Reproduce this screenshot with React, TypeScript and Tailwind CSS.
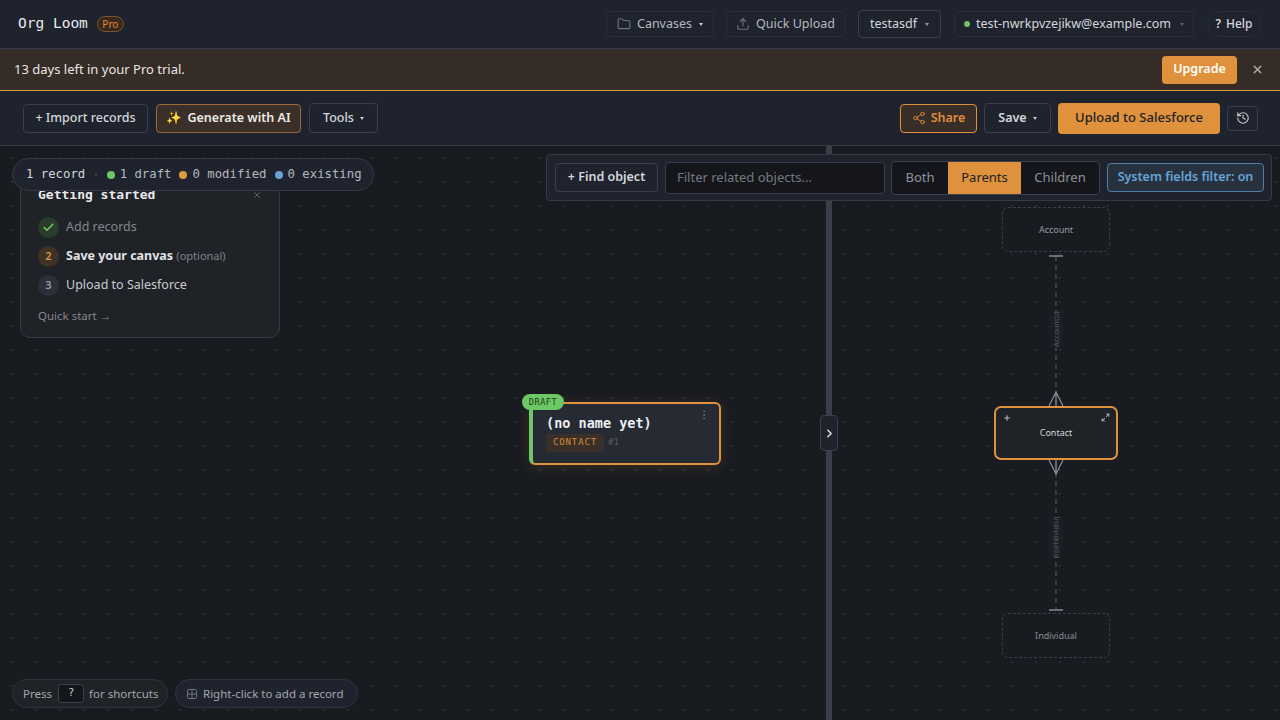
import React from "react";
import { Folder, Upload, Share2, History, Check, ChevronRight, Maximize2, Plus, X, EllipsisVertical, LayoutGrid, Grid2x2 } from "lucide-react";

const Caret = ({ c = "border-t-[#c9ccd3]" }: { c?: string }) => (
  <span className={`inline-block w-0 h-0 border-l-[2.5px] border-r-[2.5px] border-t-[3px] border-l-transparent border-r-transparent ${c}`} />
);
const mono = "font-['DejaVu_Sans_Mono',monospace]";
const dots = "bg-[radial-gradient(circle,#2a2e36_1px,transparent_1px)] bg-[length:24px_24px]";

const Step = ({ n, cls, children }: { n: React.ReactNode; cls: string; children: React.ReactNode }) => (
  <div className="flex items-center gap-[7px] h-[21px]">
    <span className={`w-[21px] h-[21px] rounded-full flex items-center justify-center text-[11px] font-semibold ${cls}`}>{n}</span>
    {children}
  </div>
);

function Header() {
  return (
    <header className="h-[49px] shrink-0 bg-[#1f232d] border-b border-[#363b47] flex items-center pl-[18px] pr-[19px]">
      <span className={`${mono} text-[14.5px] text-[#e8eaee]`}>Org Loom</span>
      <span className="ml-[9px] h-[16px] w-[27px] flex items-center justify-center rounded-full border border-[#7c5230] bg-[#38291f] text-[10px] text-[#e8862f]">Pro</span>
      <div className="ml-auto flex items-center">
        <button className="h-[26px] w-[108px] rounded border border-[#2a2e38] flex items-center justify-center gap-[6px] text-[12.5px] text-[#b5b8bf]">
          <Folder size={14} className="text-[#6d717a]" />Canvases<span className="ml-[1px] flex"><Caret /></span>
        </button>
        <button className="ml-[12px] h-[26px] w-[119px] rounded border border-[#2a2e38] flex items-center justify-center gap-[6px] text-[12.5px] text-[#b5b8bf]">
          <Upload size={14} className="text-[#6d717a]" />Quick Upload
        </button>
        <button className="ml-[13px] h-[28px] w-[83px] rounded border border-[#3a3f4b] flex items-center justify-center gap-[8px] text-[12.5px] text-[#d5d7dc]">
          testasdf<Caret c="border-t-[#9a9da5]" />
        </button>
        <button className="ml-[13px] h-[26px] w-[240px] rounded border border-[#2a2e38] flex items-center justify-center gap-[6px] text-[12.5px] text-[#d5d7dc]">
          <span className="w-[6px] h-[6px] rounded-full bg-[#6cc765]" />test-nwrkpvzejikw@example.com<span className="ml-[3px] flex"><Caret c="border-t-[#5c606a]" /></span>
        </button>
        <button className="ml-[13px] h-[26px] w-[54px] rounded-full border border-[#2a2e38] flex items-center justify-center gap-[5px] text-[12px] font-medium text-[#d5d7dc]">
          <span className="font-semibold">?</span>Help
        </button>
      </div>
    </header>
  );
}

function Banner() {
  return (
    <div className="h-[42px] shrink-0 bg-[#352b27] border-b border-[#e09240] flex items-center pl-[14px] pr-[16px]">
      <span className="text-[13px] text-[#e8e6e3]">13 days left in your Pro trial.</span>
      <button className="ml-auto h-[28px] w-[75px] rounded bg-[#df913c] text-[12.5px] font-semibold text-white">Upgrade</button>
      <X size={13} strokeWidth={3} className="ml-[14px] text-[#a9a6a3]" />
    </div>
  );
}

function Toolbar() {
  return (
    <div className="h-[55px] shrink-0 bg-[#1f232d] border-b border-[#363b47] flex items-center pl-[23px] pr-[22px]">
      <button className="h-[29px] w-[125px] rounded border border-[#3a3f4b] text-[12.5px] font-medium text-[#d5d7dc]">+ Import records</button>
      <button className="ml-[8px] h-[29px] w-[145px] rounded border border-[#9a6b3a] bg-[#3a3029] text-[12.5px] font-semibold text-[#eceae7] flex items-center justify-center gap-[5px]">
        <span>✨</span>Generate with AI
      </button>
      <button className="ml-[8px] h-[30px] w-[69px] rounded border border-[#3a3f4b] text-[12.5px] font-medium text-[#d5d7dc] flex items-center justify-center gap-[6px]">
        Tools<Caret />
      </button>
      <button className="ml-auto h-[29px] w-[77px] rounded border border-[#df913c] bg-[#382d27] text-[12.5px] font-semibold text-[#e08e3b] flex items-center justify-center gap-[5px]">
        <Share2 size={14} strokeWidth={1.5} />Share
      </button>
      <button className="ml-[7px] h-[30px] w-[67px] rounded border border-[#3a3f4b] text-[12.5px] font-semibold text-[#d5d7dc] flex items-center justify-center gap-[6px]">
        Save<Caret />
      </button>
      <button className="ml-[7px] h-[31px] w-[162px] rounded bg-[#df913c] text-[13px] font-medium text-[#1c1f26]">Upload to Salesforce</button>
      <button className="ml-[7px] h-[25px] w-[31px] rounded border border-[#3a3f4b] flex items-center justify-center text-[#c4c6cb]">
        <History size={14} />
      </button>
    </div>
  );
}

function GettingStarted() {
  return (
    <div className="absolute left-[20px] top-[30px] w-[260px] h-[162px] rounded-[10px] border border-[#363a44] bg-[#1f2227] pl-[17px] pt-[8px]">
      <div className="flex items-center justify-between pr-[17px]">
        <span className={`${mono} text-[13px] font-bold text-[#e8eaee]`}>Getting started</span>
        <X size={10} className="text-[#6f737b]" />
      </div>
      <div className="mt-[12px] flex flex-col gap-[8px] text-[12.5px]">
        <Step n={<Check size={13} strokeWidth={3} className="text-[#6cc765]" />} cls="bg-[#2b3c2f]"><span className="text-[#84878d]">Add records</span></Step>
        <Step n="2" cls="bg-[#3d3128] text-[#df913c]"><span className="font-bold text-[#e2e3e6]">Save your canvas <span className="text-[11px] font-normal text-[#7f8289]">(optional)</span></span></Step>
        <Step n="3" cls="bg-[#2c303a] text-[#9a9da5]"><span className="text-[#c9cbd0]">Upload to Salesforce</span></Step>
      </div>
      <div className="mt-[11px] text-[11.5px] text-[#84878d]">Quick start →</div>
    </div>
  );
}

function LeftPane() {
  return (
    <div className={`relative flex-1 ${dots}`}>
      <GettingStarted />
      <div className={`${mono} absolute left-[12px] top-[12px] h-[33px] w-[362px] rounded-full border border-[#363a44] bg-[#1f232d] flex items-center pl-[13px] text-[12.3px] text-[#d5d7dc] whitespace-nowrap`}>
        <span>1 record</span>
        <span className="ml-[8px] text-[#6f737b] text-[9px] mt-[3px]">·</span>
        <span className="ml-[8px] w-[8px] h-[8px] rounded-full bg-[#6cc765]" />
        <span className="ml-[5px] text-[#b5b8bf]">1 draft</span>
        <span className="ml-[8px] w-[8px] h-[8px] rounded-full bg-[#df9a3e]" />
        <span className="ml-[5px] text-[#b5b8bf]">0 modified</span>
        <span className="ml-[8px] w-[8px] h-[8px] rounded-full bg-[#67a4d8]" />
        <span className="ml-[5px] text-[#b5b8bf]">0 existing</span>
      </div>

      <div className="absolute left-[529px] top-[256px] w-[192px] h-[63px] rounded-[6px] border-2 border-[#df913c] border-l-[4px] border-l-[#6cc765] bg-[#262a33] shadow-[0_2px_14px_rgba(223,145,60,0.18)]">
        <span className={`${mono} absolute left-[13px] top-[9px] text-[13.5px] font-bold text-[#eceef1] whitespace-nowrap`}>(no name yet)</span>
        <div className="absolute left-[13px] top-[30px] flex items-center">
          <span className={`${mono} h-[18px] w-[58px] rounded-[3px] bg-[#3a3029] flex items-center justify-center text-[9px] tracking-[0.9px] font-medium text-[#d98a37]`}>CONTACT</span>
          <span className={`${mono} ml-[4px] text-[9px] text-[#5a5e67]`}>#1</span>
        </div>
        <EllipsisVertical size={12} className="absolute right-[9px] top-[5px] text-[#6f737b]" />
      </div>
      <span className={`${mono} absolute left-[522px] top-[248px] h-[16px] w-[42px] rounded-full bg-[#6cc765] flex items-center justify-center text-[8.5px] tracking-[0.6px] text-[#1f3b21]`}>DRAFT</span>
    </div>
  );
}

function Diagram() {
  return (
    <svg className="absolute left-0 top-0" width="448" height="574" viewBox="832 146 448 574" fontFamily="Noto Sans, sans-serif">
      <line x1="1056" y1="256" x2="1056" y2="610" stroke="#4a4e57" strokeWidth="1.3" strokeDasharray="5 4" />
      <line x1="1049" y1="256" x2="1063" y2="256" stroke="#888b92" strokeWidth="1.5" />
      <line x1="1049" y1="610" x2="1063" y2="610" stroke="#888b92" strokeWidth="1.5" />
      <path d="M1049 406 L1056 392 L1063 406 M1056 392 L1056 406" fill="none" stroke="#8d9097" strokeWidth="1.2" />
      <path d="M1049 460 L1056 474 L1063 460 M1056 474 L1056 460" fill="none" stroke="#8d9097" strokeWidth="1.2" />
      <rect x="1049" y="311" width="14" height="36" fill="#1b1e24" />
      <rect x="1049" y="518" width="14" height="38" fill="#1b1e24" />
      <text x="0" y="0" transform="translate(1058.5 329) rotate(-90)" textAnchor="middle" fontSize="7.5" fill="#5b5f68">AccountId</text>
      <text x="0" y="0" transform="translate(1053.5 537) rotate(90)" textAnchor="middle" fontSize="7.5" fill="#5b5f68">IndividualId</text>
    </svg>
  );
}

function RightPane() {
  return (
    <div className={`relative w-[448px] ${dots}`}>
      <Diagram />
      <div className="absolute left-[170px] top-[61px] w-[108px] h-[45px] rounded-[6px] border border-dashed border-[#3a3e47] bg-[#181b20] flex items-center justify-center text-[9px] text-[#9a9da5]">Account</div>
      <div className="absolute left-[162px] top-[260px] w-[124px] h-[54px] rounded-[7px] border-2 border-[#df913c] bg-[#1f2227] flex items-center justify-center text-[9px] text-[#d5d7dc]">
        Contact
        <Plus size={8} strokeWidth={2.5} className="absolute left-[7px] top-[6px] text-[#e0e1e4]" />
        <Maximize2 size={9} strokeWidth={2} className="absolute right-[6px] top-[5px] text-[#e0e1e4]" />
      </div>
      <div className="absolute left-[170px] top-[467px] w-[108px] h-[45px] rounded-[6px] border border-dashed border-[#3a3e47] bg-[#181b20] flex items-center justify-center text-[9px] text-[#8a8d95]">Individual</div>
    </div>
  );
}

function FilterBar() {
  return (
    <div className="absolute left-[546px] top-[8px] w-[726px] h-[47px] rounded border border-[#363a44] bg-[#1f232d] flex items-center pl-[8px] text-[13px]">
      <button className="h-[29px] w-[103px] rounded border border-[#3a3f4b] text-[12.5px] font-semibold text-[#d5d7dc]">+ Find object</button>
      <div className="ml-[7px] h-[32px] w-[220px] rounded border border-[#3a3f4b] bg-[#14161b] flex items-center pl-[11px] text-[#75787f]">Filter related objects...</div>
      <div className="ml-[6px] h-[34px] w-[209px] rounded border border-[#3a3f4b] bg-[#14161b] flex overflow-hidden text-[#8f9299]">
        <span className="w-[56px] flex items-center justify-center">Both</span>
        <span className="w-[73px] flex items-center justify-center bg-[#df913c] text-[#1c1f26]">Parents</span>
        <span className="flex-1 flex items-center justify-center">Children</span>
      </div>
      <button className="ml-[7px] h-[29px] w-[157px] rounded border border-[#4f7fa6] bg-[#27323e] text-[12.5px] font-semibold text-[#67a4d8]">System fields filter: on</button>
    </div>
  );
}

export default function App() {
  return (
    <div className="w-[1280px] h-[720px] overflow-hidden flex flex-col bg-[#181b20] font-['Noto_Sans',sans-serif]">
      <Header />
      <Banner />
      <Toolbar />
      <main className="relative flex-1 flex min-h-0">
        <LeftPane />
        <div className="w-[6px] bg-[#3a3e49]" />
        <RightPane />
        <FilterBar />
        <button className="absolute left-[820px] top-[269px] w-[18px] h-[36px] rounded border border-[#3a3f4b] bg-[#1f232d] flex items-center justify-center text-[#d5d7dc]">
          <ChevronRight size={13} strokeWidth={3} />
        </button>
        <div className="absolute left-[12px] bottom-[12px] h-[29px] w-[156px] rounded-full border border-[#30343d] bg-[#1f2227] flex items-center pl-[10px] text-[11.5px] text-[#a4a7ad]">
          Press
          <span className="ml-[6px] mr-[5px] w-[26px] h-[19px] rounded-[3px] border border-[#3a3f4b] bg-[#14161b] flex items-center justify-center text-[11px] text-[#c4c6cb] font-['DejaVu_Sans_Mono',monospace]">?</span>
          for shortcuts
        </div>
        <div className="absolute left-[175px] bottom-[12px] h-[29px] w-[183px] rounded-full border border-[#30343d] bg-[#1f232d] flex items-center pl-[10px] gap-[5px] text-[11.5px] text-[#a4a7ad]">
          <Grid2x2 size={12} className="text-[#6f737b]" />Right-click to add a record
        </div>
      </main>
    </div>
  );
}
